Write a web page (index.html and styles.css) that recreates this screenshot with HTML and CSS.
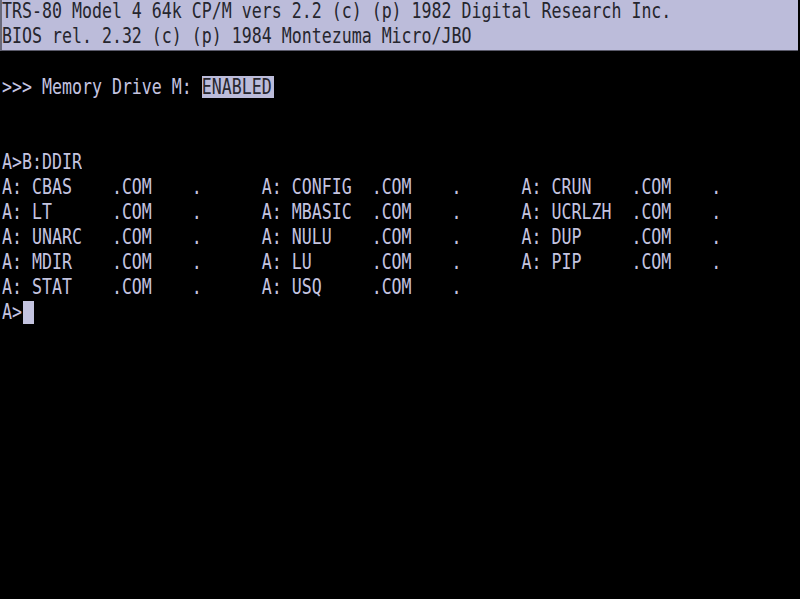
FILE: index.html
```html
<!DOCTYPE html>
<html>
<head>
<meta charset="utf-8">
<title>TRS-80 CP/M</title>
<link rel="stylesheet" href="styles.css">
</head>
<body>
<div class="screen">
<div class="band">
<div class="line"><span class="t">TRS-80 Model 4 64k CP/M vers 2.2 (c) (p) 1982 Digital Research Inc.</span></div>
<div class="line"><span class="t">BIOS rel. 2.32 (c) (p) 1984 Montezuma Micro/JBO</span></div>
</div>
<div class="line"></div>
<div class="line"><span class="t">&gt;&gt;&gt; Memory Drive M: </span><span class="rev"><span class="t">ENABLED</span></span></div>
<div class="line"></div>
<div class="line"></div>
<div class="line"><span class="t">A&gt;B:DDIR</span></div>
<div class="line"><span class="t">A: CBAS    .COM    .      A: CONFIG  .COM    .      A: CRUN    .COM    .</span></div>
<div class="line"><span class="t">A: LT      .COM    .      A: MBASIC  .COM    .      A: UCRLZH  .COM    .</span></div>
<div class="line"><span class="t">A: UNARC   .COM    .      A: NULU    .COM    .      A: DUP     .COM    .</span></div>
<div class="line"><span class="t">A: MDIR    .COM    .      A: LU      .COM    .      A: PIP     .COM    .</span></div>
<div class="line"><span class="t">A: STAT    .COM    .      A: USQ     .COM    .</span></div>
<div class="line"><span class="t">A&gt;</span><span class="cursor"></span></div>
</div>
</body>
</html>
```

FILE: styles.css
```css
html, body {
  margin: 0;
  padding: 0;
  background: #000;
}

.screen {
  width: 800px;
  height: 599px;
  overflow: hidden;
  background: #000;
  color: #c4c4e0;
  font-family: "DejaVu Sans Mono", "Liberation Mono", monospace;
  font-size: 16.6px;
}

.band {
  background: #bcbcda;
  color: #26262e;
  margin-right: 2px;
  border-left: 2px solid #6a6a7a;
  border-bottom: 1px solid #5a5a6a;
}

.band .line {
  padding-left: 0;
}

.line {
  height: 25px;
  line-height: 25px;
  padding-left: 2px;
  white-space: pre;
}

.t {
  display: inline-block;
  vertical-align: top;
  line-height: 15px;
  margin-top: 1px;
  transform: scaleY(1.3);
  transform-origin: 0 0;
}

.rev {
  display: inline-block;
  vertical-align: top;
  height: 22px;
  background: #bcbcda;
  color: #26262e;
  padding-right: 2px;
}

.cursor {
  display: inline-block;
  vertical-align: top;
  width: 11px;
  height: 23px;
  margin-left: 1px;
  background: #c4c4e0;
}
```
